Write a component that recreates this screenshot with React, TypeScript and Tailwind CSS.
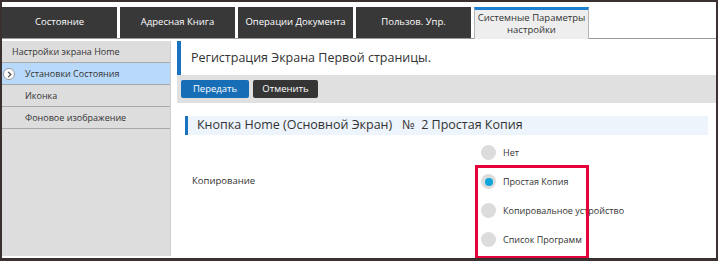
const tabs = ["Состояние", "Адресная Книга", "Операции Документа", "Пользов. Упр."];

const menu = ["Установки Состояния", "Иконка", "Фоновое изображение"];

const options = ["Нет", "Простая Копия", "Копировальное устройство", "Список Программ"];

function Radio({ checked }: { checked: boolean }) {
  return (
    <span className="flex h-[15px] w-[15px] items-center justify-center rounded-full bg-[#dcdcdc]">
      {checked && <span className="h-[8px] w-[8px] rounded-full bg-[#0ea5db]" />}
    </span>
  );
}

export default function App() {
  return (
    <div
      className="relative h-[261px] w-[718px] overflow-hidden border-x-2 border-t-2 border-b-[3px] border-[#3b3030] bg-white text-[#333]"
      style={{ fontFamily: '"Open Sans", "Noto Sans", sans-serif' }}
    >
      {/* tabs */}
      <div className="flex h-[37px] items-end gap-[3px] border-b border-[#9a9a9a] pr-[2px]">
        {tabs.map((t) => (
          <div
            key={t}
            className="flex h-[31px] w-[115px] items-center justify-center bg-[#383838] text-[9.5px] text-white"
          >
            {t}
          </div>
        ))}
        <div className="-mb-px flex h-[32px] w-[115px] flex-col items-center justify-center whitespace-nowrap border-x border-t-[3px] border-x-[#b5b5b5] border-t-[#1f7fd1] bg-[#eeeeee] pb-[2px] text-[9.5px] leading-[12px] text-[#333]">
          <span>Системные Параметры</span>
          <span>настройки</span>
        </div>
        <div className="flex-1" />
      </div>

      <div className="flex h-[217px] pt-[2px]">
        {/* sidebar */}
        <div className="w-[169px] border-r border-[#cfcfcf] bg-[#dddddd] text-[9px]">
          <div className="flex h-[22px] items-center border-b border-[#a9a9a9] pl-[10px]">
            Настройки экрана Home
          </div>
          {menu.map((m, i) => (
            <div
              key={m}
              className={`relative flex h-[22px] items-center border-b border-[#a9a9a9] pl-[23px] ${
                i === 0 ? "bg-[#b8d9f9]" : ""
              }`}
            >
              {i === 0 && (
                <span className="absolute left-[1px] top-[5px] flex h-[12px] w-[12px] items-center justify-center rounded-full border border-[#9a9a9a] bg-white">
                  <svg width="7" height="7" viewBox="0 0 8 8">
                    <path d="M2.5 1 L5.5 4 L2.5 7" fill="none" stroke="#555" strokeWidth="1.6" />
                  </svg>
                </span>
              )}
              {m}
            </div>
          ))}
        </div>

        {/* main */}
        <div className="ml-[6px] flex-1">
          <div className="flex h-[34px] items-center border-l-4 border-[#1a73c0] pl-[10px] text-[12.5px]">
            Регистрация Экрана Первой страницы.
          </div>
          <div className="flex h-[28px] items-center gap-[4px] bg-[#e0e0e0] pl-[4px]">
            <button className="h-[18px] w-[68px] rounded-[2px] bg-[#176db6] text-[9.5px] text-white">
              Передать
            </button>
            <button className="h-[18px] w-[65px] rounded-[2px] bg-[#353535] text-[9.5px] text-white">
              Отменить
            </button>
          </div>

          <div className="ml-[8px] mr-[8px] mt-[13px] flex h-[19px] items-center border-l-[3px] border-[#1a73c0] bg-[#eef4fb] pl-[9px] text-[12.5px]">
            Кнопка Home (Основной Экран)&nbsp;&nbsp;&nbsp;№&nbsp;&nbsp;2 Простая Копия
          </div>

          <div className="mt-[3px] flex">
            <div className="w-[304px] pl-[15px] pt-[36px] text-[9.5px]">Копирование</div>
            <div className="flex flex-col">
              {options.map((o, i) => (
                <div key={o} className="flex h-[29px] items-center gap-[7px] text-[9px]">
                  <Radio checked={i === 1} />
                  <span>{o}</span>
                </div>
              ))}
            </div>
          </div>
        </div>
      </div>

      {/* highlight */}
      <div className="absolute left-[473px] top-[163px] h-[94px] w-[114px] border-[3px] border-[#e4003b]" />
    </div>
  );
}
